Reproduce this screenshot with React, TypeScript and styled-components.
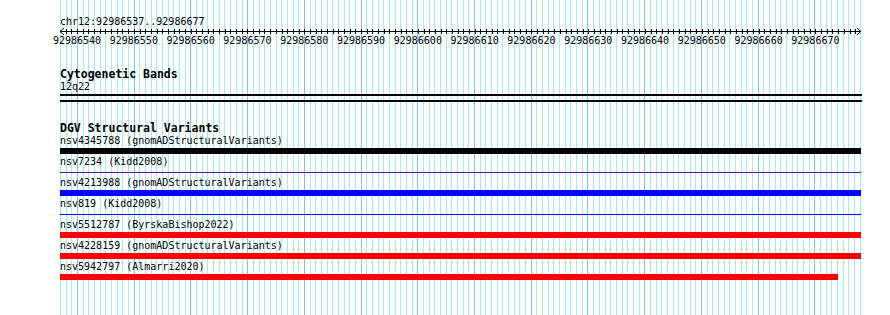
import React from "react";
import styled, { createGlobalStyle } from "styled-components";

const PX = 5.68; // pixels per base
const START = 537;
const END = 678;
const BASES = END - START;

const GRID_LIGHT = "#aae9ee";
const GRID_DARK = "#86c3ea";

type Feature = {
  name: string;
  source: string;
  start: number;
  end: number;
  color: string;
  thin?: boolean;
};

const features: Feature[] = [
  { name: "nsv4345788", source: "gnomADStructuralVariants", start: 537, end: 678.2, color: "#000000" },
  { name: "nsv7234", source: "Kidd2008", start: 537, end: 678.2, color: "#5a16a0", thin: true },
  { name: "nsv4213988", source: "gnomADStructuralVariants", start: 537, end: 678.2, color: "#0000ff" },
  { name: "nsv819", source: "Kidd2008", start: 537, end: 678.2, color: "#0000ff", thin: true },
  { name: "nsv5512787", source: "ByrskaBishop2022", start: 537, end: 678, color: "#ff0000" },
  { name: "nsv4228159", source: "gnomADStructuralVariants", start: 537, end: 678, color: "#ff0000" },
  { name: "nsv5942797", source: "Almarri2020", start: 537, end: 674, color: "#ff0000" },
];

const GlobalStyle = createGlobalStyle`
  html, body {
    margin: 0;
    padding: 0;
    background: #ffffff;
  }
  body {
    font-family: "DejaVu Sans Mono", "Liberation Mono", monospace;
    color: #000;
  }
`;

const Page = styled.div`
  width: 890px;
  height: 315px;
  padding-left: 60px;
  box-sizing: border-box;
  overflow: hidden;
`;

const Tracks = styled.div`
  position: relative;
  width: ${BASES * PX}px;
  height: 315px;
`;

const Grid = styled.div`
  position: absolute;
  inset: 0;
  display: flex;
  border-right: 1px solid ${GRID_LIGHT};
  pointer-events: none;
`;

const GridCell = styled.div<{ $major: boolean }>`
  flex: 0 0 ${PX}px;
  box-sizing: border-box;
  border-left: 1px solid ${(p) => (p.$major ? GRID_DARK : GRID_LIGHT)};
`;

const Content = styled.div`
  position: relative;
  z-index: 1;
  display: flex;
  flex-direction: column;
`;

const Ruler = styled.div`
  padding-top: 16px;
  display: flex;
  flex-direction: column;
`;

const SmallText = styled.div`
  font-size: 10px;
  line-height: 12px;
  white-space: nowrap;
`;

const Axis = styled.svg`
  display: block;
  margin-left: -1px;
  overflow: visible;
`;

const TickLabels = styled.div`
  display: flex;
  margin-left: ${(540 - START) * PX - (10 * PX) / 2}px;
  margin-top: -1px;
`;

const TickLabel = styled.div`
  flex: 0 0 ${10 * PX}px;
  text-align: center;
  font-size: 10px;
  line-height: 12px;
`;

const TrackSection = styled.section<{ $gap: number }>`
  margin-top: ${(p) => p.$gap}px;
  display: flex;
  flex-direction: column;
`;

const TrackTitle = styled.div`
  font-size: 11.5px;
  line-height: 13px;
  font-weight: bold;
  white-space: nowrap;
`;

const Band = styled.div`
  margin-top: 1px;
  height: 4px;
  border-top: 2px solid #000;
  border-bottom: 2px solid #000;
  width: calc(100% + 1px);
`;

const FeatureRow = styled.div`
  height: 21px;
  display: flex;
  flex-direction: column;
`;

const BarSlot = styled.div`
  height: 8px;
  display: flex;
  align-items: center;
`;

const Bar = styled.div<{ $color: string; $thin?: boolean }>`
  height: ${(p) => (p.$thin ? 1 : 6)}px;
  background: ${(p) => p.$color};
`;

function AxisDrawing() {
  const w = BASES * PX + 1;
  const ticks: number[] = [];
  for (let i = 1; i < BASES; i++) ticks.push(Math.round(i * PX) + 1.5);
  return (
    <Axis width={w + 2} height={8} viewBox={`0 0 ${w + 2} 8`}>
      <line x1={1} y1={3.5} x2={w} y2={3.5} stroke="#000" strokeWidth={1} />
      {ticks.map((x) => (
        <line key={x} x1={x} y1={1} x2={x} y2={6} stroke="#000" strokeWidth={1} />
      ))}
      <polyline points="5,0 1,3.5 5,7" fill="none" stroke="#000" strokeWidth={1} />
      <polyline points={`${w - 4},0 ${w},3.5 ${w - 4},7`} fill="none" stroke="#000" strokeWidth={1} />
    </Axis>
  );
}

export default function App() {
  const cells = Array.from({ length: BASES }, (_, i) => START + i);
  const labels = Array.from({ length: 14 }, (_, i) => 92986540 + i * 10);

  return (
    <>
      <GlobalStyle />
      <Page>
        <Tracks>
          <Grid>
            {cells.map((b) => (
              <GridCell key={b} $major={b % 10 === 0} />
            ))}
          </Grid>
          <Content>
            <Ruler>
              <SmallText>chr12:92986537..92986677</SmallText>
              <AxisDrawing />
              <TickLabels>
                {labels.map((l) => (
                  <TickLabel key={l}>{l}</TickLabel>
                ))}
              </TickLabels>
            </Ruler>

            <TrackSection $gap={21}>
              <TrackTitle>Cytogenetic Bands</TrackTitle>
              <SmallText>12q22</SmallText>
              <Band />
            </TrackSection>

            <TrackSection $gap={20}>
              <TrackTitle>DGV Structural Variants</TrackTitle>
              {features.map((f) => (
                <FeatureRow key={f.name}>
                  <SmallText>
                    {f.name} ({f.source})
                  </SmallText>
                  <BarSlot>
                    <Bar
                      $color={f.color}
                      $thin={f.thin}
                      style={{
                        marginLeft: (f.start - START) * PX,
                        width: (f.end - f.start) * PX,
                      }}
                    />
                  </BarSlot>
                </FeatureRow>
              ))}
            </TrackSection>
          </Content>
        </Tracks>
      </Page>
    </>
  );
}
